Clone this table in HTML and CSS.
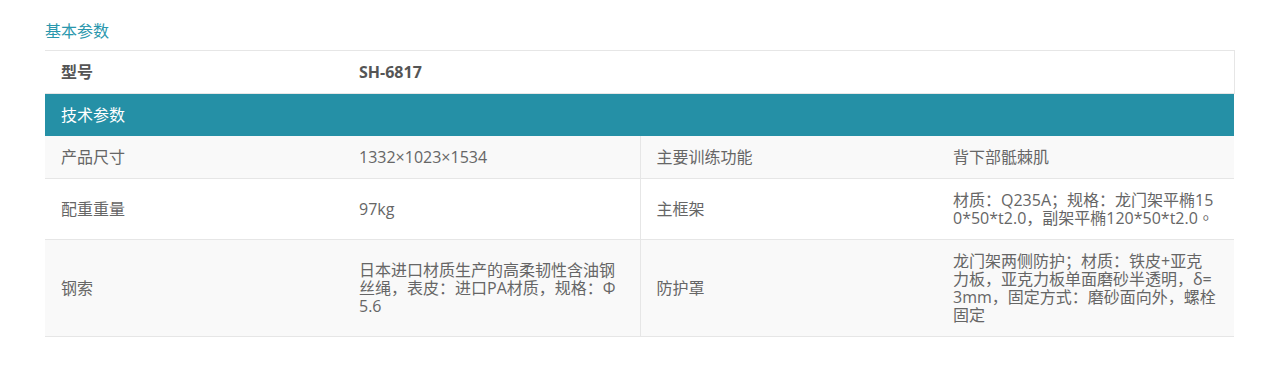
FILE: index.html
```html
<!DOCTYPE html>
<html lang="zh-CN">
<head>
<meta charset="utf-8">
<title>基本参数</title>
<link rel="stylesheet" href="styles.css">
</head>
<body>
<div class="wrap">
  <div class="title">基本参数</div>
  <table class="params">
    <colgroup>
      <col class="c1"><col class="c2"><col class="c3"><col class="c4">
    </colgroup>
    <tr class="model">
      <td class="b">型号</td>
      <td class="b" colspan="3">SH-6817</td>
    </tr>
    <tr class="head">
      <td colspan="4">技术参数</td>
    </tr>
    <tr class="grey">
      <td>产品尺寸</td>
      <td>1332×1023×1534</td>
      <td class="mid">主要训练功能</td>
      <td>背下部骶棘肌</td>
    </tr>
    <tr>
      <td>配重重量</td>
      <td>97kg</td>
      <td class="mid">主框架</td>
      <td>材质：Q235A；规格：龙门架平椭150*50*t2.0，副架平椭120*50*t2.0。</td>
    </tr>
    <tr class="grey">
      <td>钢索</td>
      <td>日本进口材质生产的高柔韧性含油钢丝绳，表皮：进口PA材质，规格：Φ5.6</td>
      <td class="mid">防护罩</td>
      <td>龙门架两侧防护；材质：铁皮+亚克力板，亚克力板单面磨砂半透明，δ=3mm，固定方式：磨砂面向外，螺栓固定</td>
    </tr>
  </table>
</div>
</body>
</html>
```

FILE: styles.css
```css
html, body {
  margin: 0;
  padding: 0;
  background: #ffffff;
}
body {
  font-family: "Open Sans", "Noto Sans CJK TC", "Noto Sans CJK SC", sans-serif;
  font-size: 16px;
  color: #666666;
}
.wrap {
  padding: 22px 0 0 45px;
  width: 1189px;
}
.title {
  color: #2a97ad;
  font-size: 16px;
  line-height: 18px;
  margin-bottom: 10px;
}
.params {
  width: 1189px;
  table-layout: fixed;
  border-collapse: collapse;
}
.c1 { width: 298px; }
.c2 { width: 297px; }
.c3 { width: 297px; }
.c4 { width: 297px; }
.params td {
  padding: 12px 16px;
  line-height: 18px;
  vertical-align: middle;
  border-bottom: 1px solid #e6e6e6;
  word-break: break-all;
  font-size: 16px;
}
.params td.mid {
  border-left: 1px solid #e6e6e6;
}
.model td {
  border-top: 1px solid #e6e6e6;
  background: #ffffff;
}
.model td:last-child {
  border-right: 1px solid #e6e6e6;
}
.model td.b {
  font-weight: bold;
  color: #555555;
}
.head td {
  background: #2590a6;
  color: #ffffff;
  border-bottom: none;
}
.grey td {
  background: #f9f9f9;
}
```
